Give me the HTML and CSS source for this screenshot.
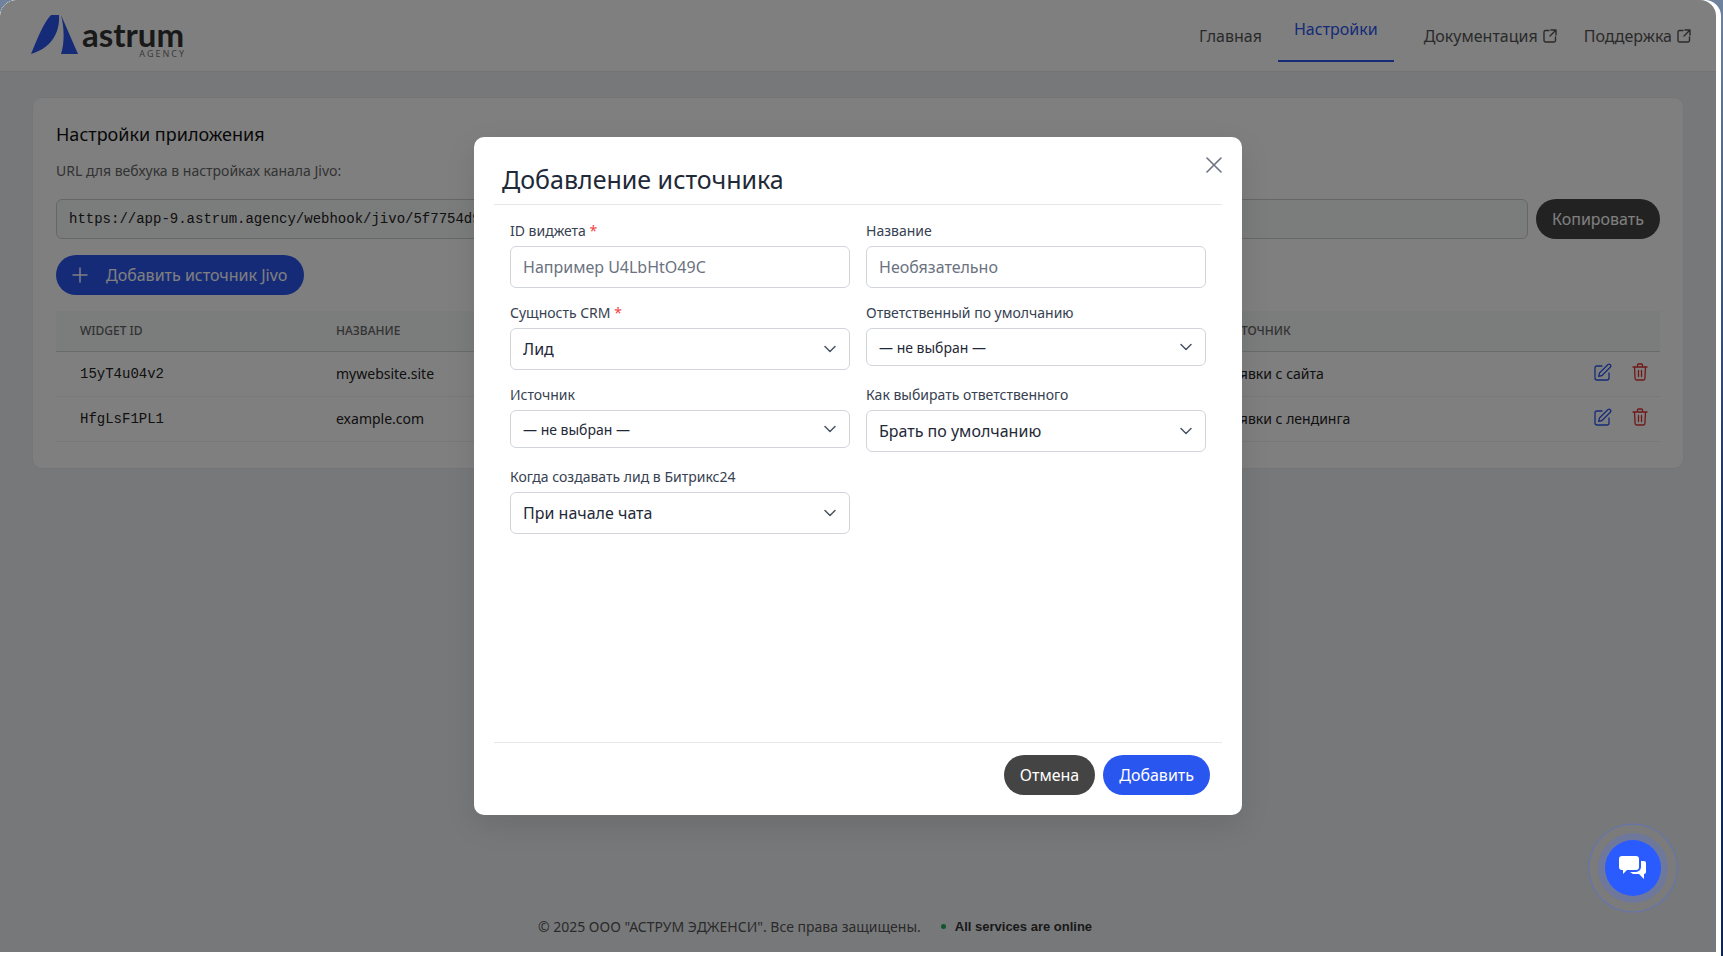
FILE: index.html
```html
<!DOCTYPE html>
<html lang="ru">
<head>
    <meta charset="UTF-8">
    <title>Настройки приложения</title>
    <link rel="stylesheet" href="styles.css">
</head>
<body>
<div class="window">
    <div class="app">
        <header class="topbar">
            <a class="logo" href="#">
                <svg class="logo-mark" width="48" height="41" viewBox="0 0 48 41">
                    <path fill="#2a56f0" d="M0 40 C7 23 13 8 20 1 L28 1 C29 14 24 33 0 40 Z"/>
                    <path fill="#2a56f0" d="M30 1 L47 40 L30 40 C34 28 33 12 30 1 Z"/>
                </svg>
                <span class="logo-text">
                    <span class="logo-name">astrum</span>
                    <span class="logo-sub">AGENCY</span>
                </span>
            </a>
            <nav class="nav">
                <a class="nav-link" href="#">Главная</a>
                <a class="nav-link active" href="#">Настройки</a>
                <a class="nav-link ext" href="#">Документация
                    <svg width="16" height="16" viewBox="0 0 16 16" fill="none" stroke="currentColor" stroke-width="1.4" stroke-linecap="round" stroke-linejoin="round"><path d="M7 2.5H3.5a1.5 1.5 0 0 0-1.500 1.500v8.500a1.500 1.500 0 0 0 1.500 1.500h8.500a1.500 1.500 0 0 0 1.500-1.500V9"/><path d="M9 2h5v5M14 2 8 8"/></svg>
                </a>
                <a class="nav-link ext" href="#">Поддержка
                    <svg width="16" height="16" viewBox="0 0 16 16" fill="none" stroke="currentColor" stroke-width="1.4" stroke-linecap="round" stroke-linejoin="round"><path d="M7 2.500H3.500a1.500 1.500 0 0 0-1.500 1.500v8.500a1.500 1.500 0 0 0 1.500 1.500h8.500a1.500 1.500 0 0 0 1.500-1.500V9"/><path d="M9 2h5v5M14 2 8 8"/></svg>
                </a>
            </nav>
        </header>

        <main class="content">
            <section class="card">
                <h2 class="card-title">Настройки приложения</h2>
                <p class="hint">URL для вебхука в настройках канала Jivo:</p>
                <div class="url-row">
                    <input class="url-input" type="text" value="https://app-9.astrum.agency/webhook/jivo/5f7754d9c1e04b7a" readonly>
                    <button class="btn btn-dark">Копировать</button>
                </div>
                <button class="btn btn-primary btn-add">
                    <svg width="16" height="16" viewBox="0 0 16 16" fill="none" stroke="currentColor" stroke-width="1.500" stroke-linecap="round"><path d="M8 1v14M1 8h14"/></svg>
                    Добавить источник Jivo
                </button>
                <table class="sources">
                    <thead>
                        <tr><th class="col-id">Widget ID</th><th class="col-name">Название</th><th class="col-source">Источник</th><th class="col-actions"></th></tr>
                    </thead>
                    <tbody>
                        <tr>
                            <td class="mono">15yT4u04v2</td><td>mywebsite.site</td><td>Заявки с сайта</td>
                            <td class="actions">
                                <svg class="icon-edit" width="18" height="18" viewBox="0 0 18 18" fill="none" stroke="currentColor" stroke-width="1.300" stroke-linecap="round" stroke-linejoin="round"><path d="M8 3H3a2 2 0 0 0-2 2v10a2 2 0 0 0 2 2h10a2 2 0 0 0 2-2v-5"/><path d="M14 1.500a1.800 1.800 0 0 1 2.500 2.500L8 12.500l-3.300.800.800-3.300z"/></svg>
                                <svg class="icon-trash" width="16" height="18" viewBox="0 0 16 18" fill="none" stroke="currentColor" stroke-width="1.300" stroke-linecap="round" stroke-linejoin="round"><path d="M1 4h14M5.500 4V2a1 1 0 0 1 1-1h3a1 1 0 0 1 1 1v2M2.500 4l.6 11.500a1.500 1.500 0 0 0 1.500 1.500h6.800a1.500 1.500 0 0 0 1.500-1.500L13.500 4M6.500 7.500v6M9.500 7.500v6"/></svg>
                            </td>
                        </tr>
                        <tr>
                            <td class="mono">HfgLsF1PL1</td><td>example.com</td><td>Заявки с лендинга</td>
                            <td class="actions">
                                <svg class="icon-edit" width="18" height="18" viewBox="0 0 18 18" fill="none" stroke="currentColor" stroke-width="1.300" stroke-linecap="round" stroke-linejoin="round"><path d="M8 3H3a2 2 0 0 0-2 2v10a2 2 0 0 0 2 2h10a2 2 0 0 0 2-2v-5"/><path d="M14 1.500a1.800 1.800 0 0 1 2.500 2.500L8 12.500l-3.300.800.800-3.300z"/></svg>
                                <svg class="icon-trash" width="16" height="18" viewBox="0 0 16 18" fill="none" stroke="currentColor" stroke-width="1.300" stroke-linecap="round" stroke-linejoin="round"><path d="M1 4h14M5.500 4V2a1 1 0 0 1 1-1h3a1 1 0 0 1 1 1v2M2.500 4l.6 11.500a1.500 1.500 0 0 0 1.500 1.500h6.800a1.500 1.500 0 0 0 1.500-1.500L13.500 4M6.500 7.500v6M9.500 7.500v6"/></svg>
                            </td>
                        </tr>
                    </tbody>
                </table>
            </section>
        </main>

        <footer class="footer">
            <span class="copy">© 2025 ООО "АСТРУМ ЭДЖЕНСИ". Все права защищены.</span>
            <span class="status"><i class="status-dot"></i>All services are online</span>
        </footer>

        <div class="overlay">
            <div class="modal">
                <div class="modal-head">
                    <h3 class="modal-title">Добавление источника</h3>
                    <button class="modal-close" aria-label="Закрыть">
                        <svg width="16" height="16" viewBox="0 0 16 16" fill="none" stroke="currentColor" stroke-width="1.600" stroke-linecap="round"><path d="M1 1l14 14M15 1 1 15"/></svg>
                    </button>
                </div>
                <form class="modal-body">
                    <div class="field">
                        <label>ID виджета <b class="req">*</b></label>
                        <input class="control" type="text" placeholder="Например U4LbHtO49C">
                    </div>
                    <div class="field">
                        <label>Название</label>
                        <input class="control" type="text" placeholder="Необязательно">
                    </div>
                    <div class="field">
                        <label>Сущность CRM <b class="req">*</b></label>
                        <div class="select-wrap">
                            <select class="control"><option>Лид</option></select>
                            <svg class="chevron" width="12" height="8" viewBox="0 0 12 8" fill="none" stroke="currentColor" stroke-width="1.500" stroke-linecap="round" stroke-linejoin="round"><path d="M1 1.500l5 5 5-5"/></svg>
                        </div>
                    </div>
                    <div class="field">
                        <label>Ответственный по умолчанию</label>
                        <div class="select-wrap">
                            <select class="control small"><option>— не выбран —</option></select>
                            <svg class="chevron" width="12" height="8" viewBox="0 0 12 8" fill="none" stroke="currentColor" stroke-width="1.500" stroke-linecap="round" stroke-linejoin="round"><path d="M1 1.500l5 5 5-5"/></svg>
                        </div>
                    </div>
                    <div class="field">
                        <label>Источник</label>
                        <div class="select-wrap">
                            <select class="control small"><option>— не выбран —</option></select>
                            <svg class="chevron" width="12" height="8" viewBox="0 0 12 8" fill="none" stroke="currentColor" stroke-width="1.500" stroke-linecap="round" stroke-linejoin="round"><path d="M1 1.500l5 5 5-5"/></svg>
                        </div>
                    </div>
                    <div class="field">
                        <label>Как выбирать ответственного</label>
                        <div class="select-wrap">
                            <select class="control"><option>Брать по умолчанию</option></select>
                            <svg class="chevron" width="12" height="8" viewBox="0 0 12 8" fill="none" stroke="currentColor" stroke-width="1.500" stroke-linecap="round" stroke-linejoin="round"><path d="M1 1.500l5 5 5-5"/></svg>
                        </div>
                    </div>
                    <div class="field">
                        <label>Когда создавать лид в Битрикс24</label>
                        <div class="select-wrap">
                            <select class="control"><option>При начале чата</option></select>
                            <svg class="chevron" width="12" height="8" viewBox="0 0 12 8" fill="none" stroke="currentColor" stroke-width="1.500" stroke-linecap="round" stroke-linejoin="round"><path d="M1 1.500l5 5 5-5"/></svg>
                        </div>
                    </div>
                </form>
                <div class="modal-foot">
                    <button class="btn btn-grey">Отмена</button>
                    <button class="btn btn-blue">Добавить</button>
                </div>
            </div>
        </div>

        <div class="chat-widget">
            <svg width="28" height="26" viewBox="0 0 28 26" fill="#fff"><path d="M3 1h14a3 3 0 0 1 3 3v8a3 3 0 0 1-3 3H8l-4 4v-4H3a3 3 0 0 1-3-3V4a3 3 0 0 1 3-3z"/><path d="M22 6h3a2 2 0 0 1 2 2v9a2 2 0 0 1-2 2v5l-5-5h-6l-3-2h6a5 5 0 0 0 5-5z"/></svg>
        </div>
    </div>
</div>
</body>
</html>
```

FILE: styles.css
```css
* {
    box-sizing: border-box;
}

html, body {
    height: 100%;
}

body {
    margin: 0;
    background: linear-gradient(180deg, #6f829e 0%, #0e2a5e 60%, #0b2556 100%);
    font-family: "Noto Sans", sans-serif;
    color: #111;
    overflow: hidden;
}

a {
    text-decoration: none;
    color: inherit;
}

.window {
    width: 1721px;
    height: 956px;
    background: #fff;
    border-radius: 16px 16px 0 0;
    overflow: hidden;
}

.app {
    position: relative;
    width: 1716px;
    height: 952px;
    background: #eff1f4;
    display: flex;
    flex-direction: column;
    border-radius: 16px 16px 0 0;
    overflow: hidden;
}

/* top bar */
.topbar {
    height: 72px;
    flex: none;
    background: #fff;
    border-bottom: 1px solid #e6e8ec;
    display: flex;
    align-items: center;
    justify-content: space-between;
    padding: 0 24px 0 31px;
}

.logo {
    display: flex;
    align-items: flex-start;
    gap: 3px;
    margin-top: 1px;
}

.logo-text {
    display: flex;
    flex-direction: column;
    align-items: flex-end;
    margin-top: 5px;
}

.logo-name {
    font-family: Lato, sans-serif;
    font-size: 33px;
    font-weight: 700;
    line-height: 30px;
    color: #333;
}

.logo-sub {
    font-size: 9px;
    letter-spacing: 2px;
    line-height: 10px;
    color: #777;
    margin-right: -2px;
}

.nav {
    display: flex;
    align-items: center;
    height: 72px;
}

.nav-link {
    font-size: 16px;
    color: #555;
    padding: 0 16px;
    display: flex;
    align-items: center;
    gap: 4px;
}

.nav-link.active {
    color: #2a56f0;
    height: 52px;
    margin: 0 4px 0 0;
    padding-bottom: 12px;
    border-bottom: 2px solid #2a56f0;
}

.nav-link.ext {
    padding: 0 0 0 26px;
}

.nav-link.ext:first-of-type {
    padding-left: 14px;
}

/* settings card */
.content {
    flex: 1;
    padding: 25px 32px 0;
}

.card {
    background: #fff;
    border: 1px solid #e9ebee;
    border-radius: 10px;
    padding: 23px 23px 24px;
    height: 372px;
}

.card-title {
    margin: 0;
    font-size: 18px;
    font-weight: 400;
    line-height: 26px;
    color: #111;
}

.hint {
    margin: 14px 0 0;
    font-size: 14px;
    line-height: 20px;
    color: #666;
}

.url-row {
    display: flex;
    gap: 8px;
    margin-top: 18px;
}

.url-input {
    flex: 1;
    height: 40px;
    border: 1px solid #ccc;
    border-radius: 6px;
    background: #f7f8f8;
    padding: 0 12px;
    font-family: "Liberation Mono", monospace;
    font-size: 14px;
    color: #222;
}

.btn {
    border: none;
    border-radius: 20px;
    height: 40px;
    padding: 0 16px;
    font-family: inherit;
    font-size: 16px;
    display: inline-flex;
    align-items: center;
    cursor: pointer;
}

.btn-dark {
    background: #444;
    color: #fff;
}

.btn-primary {
    background: #2a56f0;
    color: #fff;
}

.btn-add {
    margin-top: 16px;
    gap: 18px;
}

.sources {
    width: 100%;
    margin-top: 16px;
    border-collapse: collapse;
    table-layout: fixed;
}

.sources th {
    height: 40px;
    background: #f7f8f8;
    border-bottom: 1px solid #d5d7da;
    padding: 0 24px;
    text-align: left;
    font-size: 12px;
    font-weight: 500;
    text-transform: uppercase;
    color: #666;
}

.col-id {
    width: 256px;
}

.col-name {
    width: 888px;
}

.col-actions {
    width: 128px;
}

.sources td {
    height: 45px;
    border-bottom: 1px solid #f0f1f2;
    padding: 0 24px;
    font-size: 14px;
    color: #222;
}

.sources td.mono {
    font-family: "Liberation Mono", monospace;
}

.sources td.actions {
    padding: 0 12px 6px 0;
    text-align: right;
}

.icon-edit {
    color: #2a56f0;
    margin-right: 16px;
    vertical-align: middle;
}

.icon-trash {
    color: #e02f2f;
    vertical-align: middle;
}

/* footer */
.footer {
    display: flex;
    justify-content: center;
    align-items: center;
    gap: 20px;
    height: 52px;
    padding: 0 86px 0 0;
    flex: none;
    margin-top: auto;
}

.copy {
    font-size: 14px;
    color: #555;
}

.status {
    display: flex;
    align-items: center;
    gap: 9px;
    font-family: "Liberation Sans", sans-serif;
    font-size: 13px;
    font-weight: 700;
    color: #333;
}

.status-dot {
    width: 5px;
    height: 5px;
    border-radius: 50%;
    background: #22a85a;
}

/* modal */
.overlay {
    position: absolute;
    inset: 0;
    background: rgba(0, 0, 0, 0.5);
    display: flex;
    align-items: center;
    justify-content: center;
}

.modal {
    width: 768px;
    height: 678px;
    background: #fff;
    border-radius: 10px;
    padding: 0 20px;
    display: flex;
    flex-direction: column;
    box-shadow: 0 10px 30px rgba(0, 0, 0, 0.1);
}

.modal-head {
    height: 68px;
    flex: none;
    display: flex;
    justify-content: space-between;
    align-items: flex-start;
    border-bottom: 1px solid #e5e7eb;
    padding-left: 8px;
}

.modal-title {
    margin: 24px 0 0;
    font-size: 25px;
    font-weight: 400;
    line-height: 36px;
    color: #1f2937;
}

.modal-close {
    border: none;
    background: none;
    padding: 0;
    margin: 20px 0 0;
    color: #6b7280;
    height: 16px;
    cursor: pointer;
}

.modal-body {
    flex: 1;
    padding: 16px 16px 0;
    display: grid;
    grid-template-columns: 340px 340px;
    column-gap: 16px;
    grid-auto-rows: 82px;
    align-content: start;
}

.field label {
    display: block;
    font-size: 14px;
    line-height: 20px;
    height: 25px;
    color: #374151;
}

.req {
    color: #ef4444;
    font-weight: 400;
}

.control {
    display: block;
    width: 100%;
    height: 42px;
    border: 1px solid #d1d5db;
    border-radius: 6px;
    background: #fff;
    padding: 0 12px;
    font-family: inherit;
    font-size: 16px;
    color: #1f2937;
    appearance: none;
}

.control.small {
    height: 38px;
    font-size: 14px;
}

.control::placeholder {
    color: #6b7280;
}

.select-wrap {
    position: relative;
}

.chevron {
    position: absolute;
    right: 14px;
    top: 17px;
    color: #4b5563;
}

.small + .chevron {
    top: 15px;
}

.modal-foot {
    height: 73px;
    flex: none;
    border-top: 1px solid #e5e7eb;
    display: flex;
    justify-content: flex-end;
    align-items: flex-start;
    gap: 8px;
    padding: 12px 12px 0 0;
}

.btn-grey {
    background: #444;
    color: #fff;
}

.btn-blue {
    background: #2a56f0;
    color: #fff;
}

/* chat button sits above the overlay */
.chat-widget {
    position: absolute;
    left: 1605px;
    top: 840px;
    width: 56px;
    height: 56px;
    border-radius: 50%;
    background: #2a5bff;
    display: flex;
    align-items: center;
    justify-content: center;
    box-shadow: 0 0 0 7px rgba(70, 110, 255, 0.25), 0 0 0 15.5px #7b7b7b, 0 0 0 16.5px rgba(70, 110, 255, 0.45);
}
```
